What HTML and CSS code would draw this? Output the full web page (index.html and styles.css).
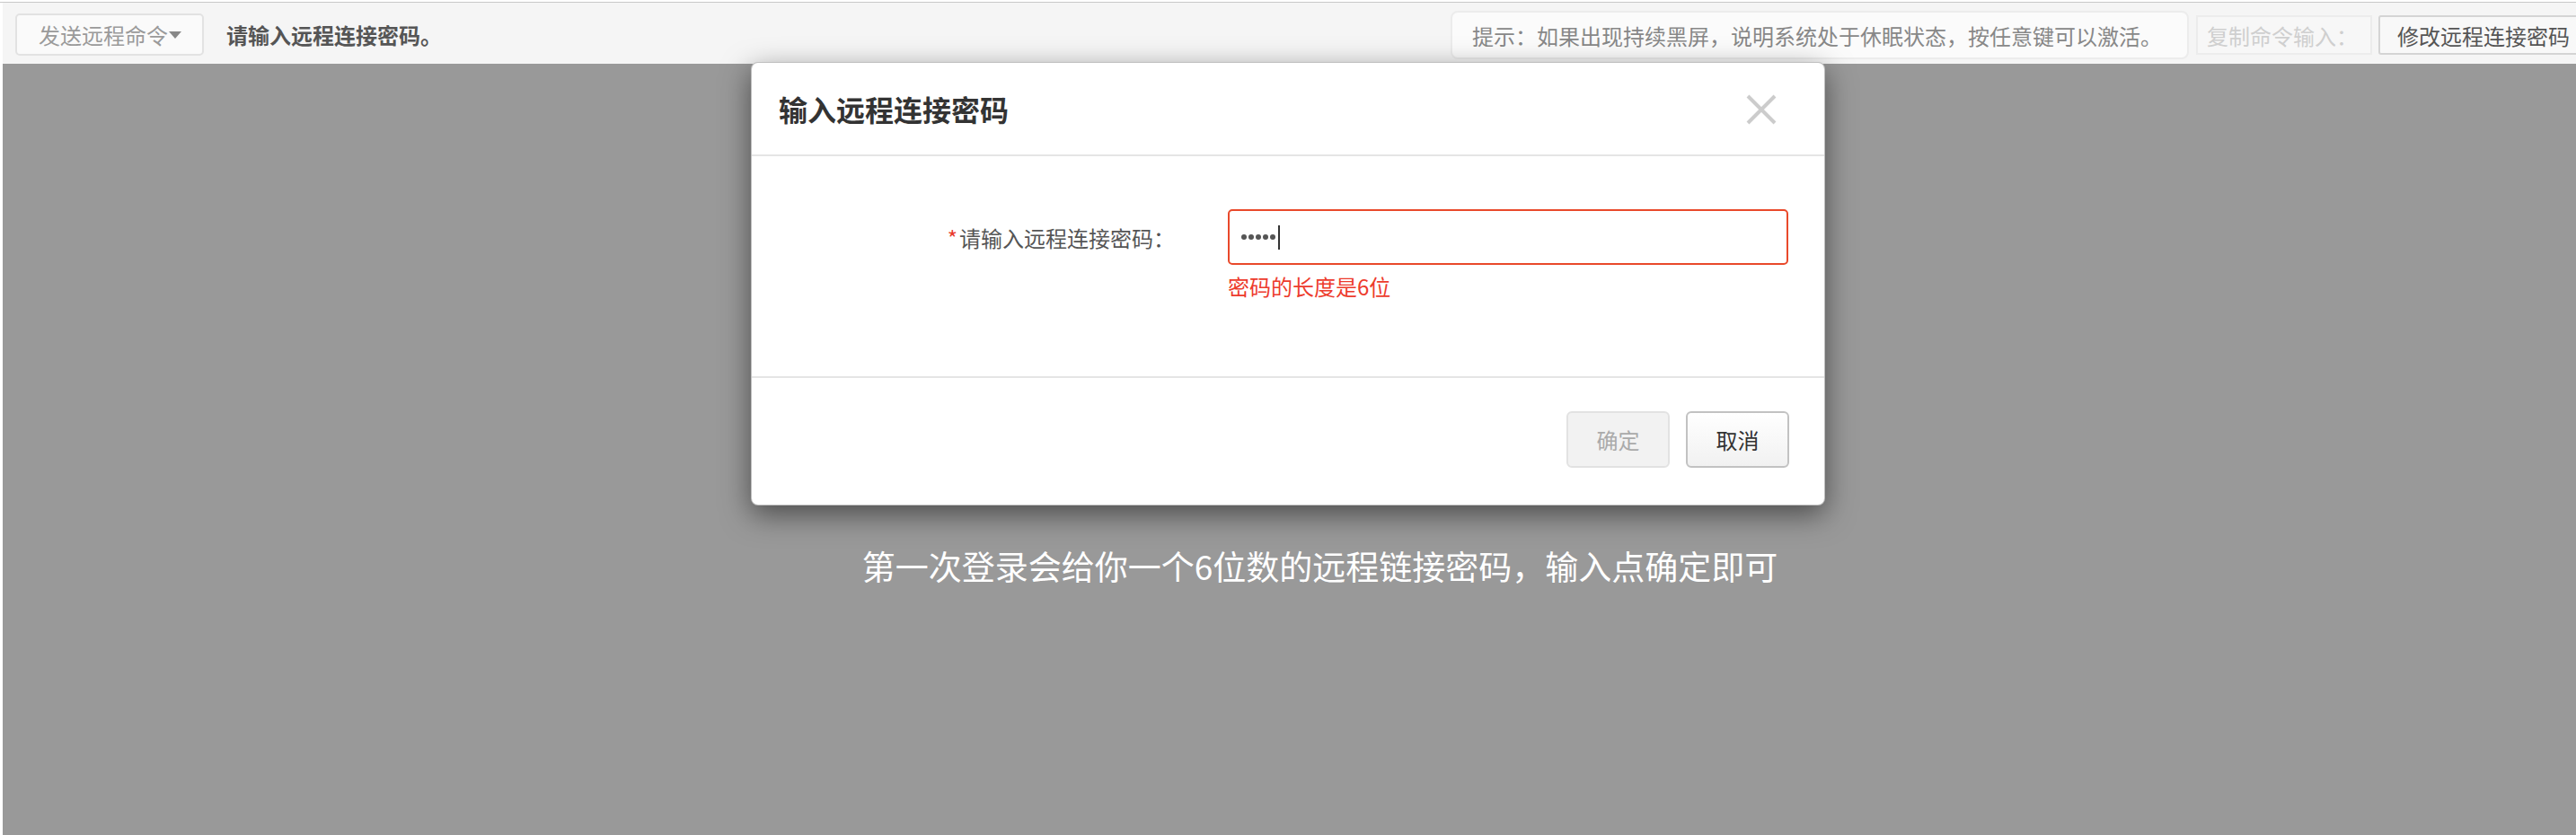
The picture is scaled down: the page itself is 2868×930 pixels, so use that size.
FILE: index.html
```html
<!DOCTYPE html>
<html lang="zh-CN">
<head>
<meta charset="utf-8">
<title>远程连接</title>
<link rel="stylesheet" href="styles.css">
</head>
<body>
<div class="app">
  <div class="inner">
    <div class="toolbar">
      <button class="cmd-btn">发送远程命令<span class="caret"></span></button>
      <span class="status">请输入远程连接密码。</span>
      <div class="right-group">
        <div class="hint">提示：如果出现持续黑屏，说明系统处于休眠状态，按任意键可以激活。</div>
        <div class="copy-input">复制命令输入：</div>
        <button class="modify-btn">修改远程连接密码</button>
      </div>
    </div>
    <div class="stage">
      <div class="modal">
        <div class="modal-header">
          <h3 class="modal-title">输入远程连接密码</h3>
          <svg class="close" width="34" height="34" viewBox="0 0 34 34"><path d="M2 2 L32 32 M32 2 L2 32" stroke="#cccccc" stroke-width="4" fill="none"/></svg>
        </div>
        <div class="modal-body">
          <div class="form-row">
            <label class="form-label"><span class="req">*</span>请输入远程连接密码：</label>
            <div class="field">
              <div class="pwd-input">
                <span class="dot"></span><span class="dot"></span><span class="dot"></span><span class="dot"></span><span class="dot"></span><span class="cursor"></span>
              </div>
              <div class="error">密码的长度是6位</div>
            </div>
          </div>
        </div>
        <div class="modal-footer">
          <button class="btn btn-disabled">确定</button>
          <button class="btn btn-default">取消</button>
        </div>
      </div>
      <p class="caption">第一次登录会给你一个6位数的远程链接密码，输入点确定即可</p>
    </div>
  </div>
</div>
</body>
</html>
```

FILE: styles.css
```css
* { box-sizing: border-box; }
html, body {
  margin: 0;
  padding: 0;
  overflow: hidden;
  background: #ffffff;
  font-family: "Noto Sans CJK SC", "Noto Sans", sans-serif;
  font-size: 24px;
}
.app {
  padding-top: 2px;
}
.inner {
  border-top: 1px solid #c8c8c8;
  padding-left: 3px;
}
.toolbar {
  height: 68px;
  background: #f5f5f5;
  display: flex;
  align-items: center;
  padding-left: 14px;
}
.cmd-btn {
  flex-shrink: 0;
  height: 47px;
  width: 210px;
  margin-top: 3px;
  padding: 0 0 0 24px;
  display: flex;
  align-items: center;
  background: #fafafa;
  border: 2px solid #e2e2e2;
  border-radius: 5px;
  color: #9a9a9a;
  font-family: inherit;
  font-size: 24px;
}
.caret {
  width: 0;
  height: 0;
  margin-left: 1px;
  border-left: 7px solid transparent;
  border-right: 7px solid transparent;
  border-top: 8px solid #888;
}
.status {
  flex-shrink: 0;
  margin-left: 25px;
  margin-top: 2px;
  font-weight: bold;
  color: #555;
}
.right-group {
  margin-left: auto;
  margin-right: -17px;
  display: flex;
  align-items: center;
  flex-shrink: 0;
}
.hint {
  width: 822px;
  height: 54px;
  margin-top: 4px;
  padding-left: 22px;
  display: flex;
  align-items: center;
  background: #fbfbfb;
  border: 2px solid #ececec;
  border-radius: 8px;
  color: #888;
}
.copy-input {
  width: 196px;
  height: 44px;
  margin-left: 8px;
  margin-top: 4px;
  padding-left: 10px;
  display: flex;
  align-items: center;
  background: #f7f7f7;
  border: 2px solid #ececec;
  color: #cfcfcf;
}
.modify-btn {
  width: 237px;
  height: 44px;
  margin-left: 7px;
  margin-top: 4px;
  padding: 0 0 0 19px;
  text-align: left;
  background: #f8f8f8;
  border: 2px solid #d4d4d4;
  border-radius: 3px;
  color: #555;
  font-family: inherit;
  font-size: 24px;
}
.stage {
  height: 859px;
  background: #999999;
  display: flex;
  flex-direction: column;
  align-items: center;
}
.modal {
  position: relative;
  z-index: 2;
  width: 1196px;
  margin-top: -2px;
  margin-right: 3px;
  background: #ffffff;
  border: 1px solid rgba(0, 0, 0, 0.25);
  border-radius: 8px;
  box-shadow: 0 10px 32px rgba(0, 0, 0, 0.5);
}
.modal-header {
  height: 104px;
  padding: 0 53px 0 30px;
  display: flex;
  align-items: center;
  justify-content: space-between;
  border-bottom: 2px solid #e5e5e5;
}
.modal-title {
  margin: 0;
  font-size: 32px;
  font-weight: bold;
  color: #333;
}
.close {
  display: block;
  margin-top: 2px;
}
.modal-body {
  height: 245px;
  padding-top: 59px;
}
.form-row {
  display: grid;
  grid-template-columns: 530px 624px;
}
.form-label {
  height: 62px;
  display: flex;
  align-items: center;
  justify-content: flex-end;
  padding-right: 59px;
  color: #555;
}
.req {
  color: #e8392c;
  margin-right: 2px;
  align-self: flex-start;
  margin-top: 14px;
}
.pwd-input {
  height: 62px;
  padding-left: 13px;
  display: flex;
  align-items: center;
  border: 2px solid #e9492b;
  border-radius: 5px;
}
.dot {
  width: 6px;
  height: 6px;
  margin-right: 2px;
  border-radius: 50%;
  background: #555;
}
.cursor {
  width: 2px;
  height: 27px;
  margin-left: 1px;
  background: #333;
}
.error {
  margin-top: 6px;
  line-height: 36px;
  color: #ed3b2c;
}
.modal-footer {
  height: 143px;
  padding: 37px 39px 0 0;
  display: flex;
  justify-content: flex-end;
  gap: 18px;
  border-top: 2px solid #e5e5e5;
}
.btn {
  width: 115px;
  height: 63px;
  font-family: inherit;
  font-size: 24px;
  border-radius: 6px;
  padding: 0;
}
.btn-disabled {
  background: #f2f2f2;
  border: 2px solid #e2e2e2;
  color: #aaaaaa;
}
.btn-default {
  background: linear-gradient(#ffffff, #f1f1f1);
  border: 2px solid #c2c2c2;
  color: #333;
}
.caption {
  margin: 42px 0 0 68px;
  font-size: 37px;
  line-height: 50px;
  color: #ffffff;
}
```
